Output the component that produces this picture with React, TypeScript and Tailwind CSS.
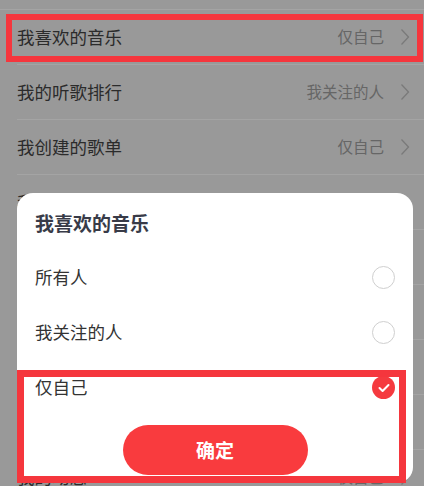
import React from "react";

const rows: { label: string; value: string }[] = [
  { label: "我喜欢的音乐", value: "仅自己" },
  { label: "我的听歌排行", value: "我关注的人" },
  { label: "我创建的歌单", value: "仅自己" },
  { label: "我收藏的歌单", value: "仅自己" },
  { label: "我收藏的专辑", value: "仅自己" },
  { label: "我关注的歌手", value: "仅自己" },
  { label: "我的电台", value: "仅自己" },
  { label: "我的视频", value: "仅自己" },
  { label: "我的动态", value: "仅自己" },
];

const options = ["所有人", "我关注的人", "仅自己"];

function Chevron() {
  return (
    <svg width="10" height="18" viewBox="0 0 10 18" fill="none">
      <polyline points="1.5,1.5 8.5,9 1.5,16.5" stroke="#7a7a7a" strokeWidth="1.3" />
    </svg>
  );
}

function Radio({ checked }: { checked: boolean }) {
  if (checked) {
    return (
      <div className="w-[23px] h-[23px] rounded-full bg-[#f53a3f] flex items-center justify-center">
        <svg width="12" height="10" viewBox="0 0 12 10" fill="none">
          <polyline points="1.5,5 4.6,8 10.5,2" stroke="#fff" strokeWidth="2" strokeLinecap="round" strokeLinejoin="round" />
        </svg>
      </div>
    );
  }
  return <div className="w-[23px] h-[23px] rounded-full border border-[#cfcfcf]" />;
}

export default function App() {
  return (
    <div
      className="relative w-[424px] h-[486px] overflow-hidden bg-[#999999]"
      style={{ fontFamily: '"Noto Sans CJK SC", "Noto Sans", sans-serif' }}
    >
      {/* privacy settings list, dimmed by the modal */}
      <div className="flex flex-col">
        <div className="h-[10px] border-b border-[#a4a4a4]" />
        {rows.map((r) => (
          <div key={r.label} className="ml-[17px] h-[55px] border-b border-[#a4a4a4] flex items-center justify-between pr-[14px]">
            <span className="text-[17.5px] text-[#2b2b2b]">{r.label}</span>
            <div className="flex items-center gap-[16px]">
              <span className="text-[15.5px] text-[#666666]">{r.value}</span>
              <Chevron />
            </div>
          </div>
        ))}
      </div>

      {/* highlight around the first row */}
      <div className="absolute left-[6px] top-[14px] w-[417px] h-[48px] border-[6px] border-[#f5363d]" />

      {/* visibility picker sheet */}
      <div className="absolute left-[17px] top-[193px] w-[396px] h-[290px] rounded-[16px] bg-white flex flex-col px-[18px]">
        <div className="h-[57px] flex items-center pt-[3px]">
          <span className="text-[19px] font-bold text-[#383b48]">我喜欢的音乐</span>
        </div>
        {options.map((o, i) => (
          <div key={o} className="h-[55px] flex items-center justify-between">
            <span className="text-[17.5px] text-[#333333]">{o}</span>
            <Radio checked={i === 2} />
          </div>
        ))}
        <button className="mt-[10px] mx-auto w-[185px] h-[50px] rounded-full bg-[#f93b3e] text-white text-[19px] font-bold">
          确定
        </button>
      </div>

      {/* highlight around the chosen option and confirm button */}
      <div className="absolute left-[17px] top-[370px] w-[389px] h-[113px] border-[7px] border-[#f5363d]" />
    </div>
  );
}
